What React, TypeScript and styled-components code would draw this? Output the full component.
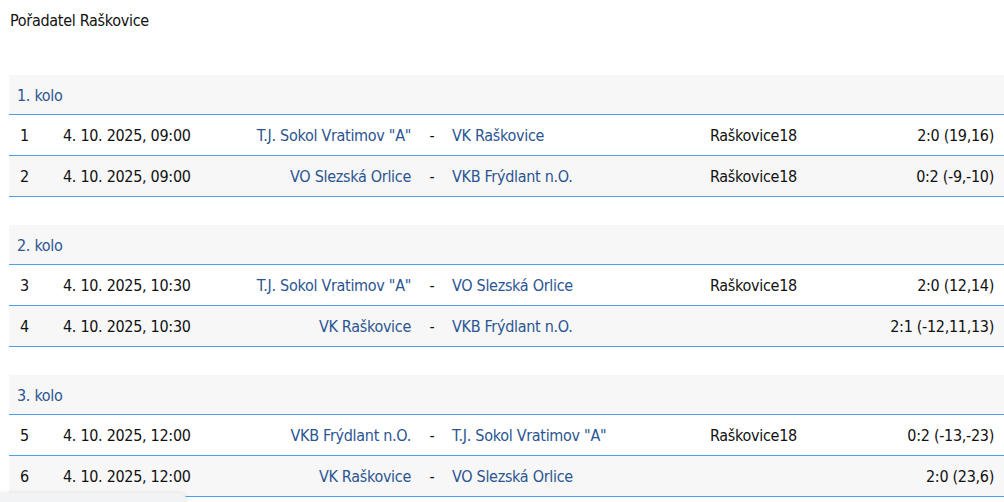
import { FC } from "react";
import styled, { createGlobalStyle } from "styled-components";

interface IMatch {
  no: number;
  date: string;
  home: string;
  away: string;
  venue?: string;
  score: string;
}

interface IRound {
  title: string;
  matches: IMatch[];
}

const rounds: IRound[] = [
  {
    title: "1. kolo",
    matches: [
      { no: 1, date: "4. 10. 2025, 09:00", home: 'T.J. Sokol Vratimov "A"', away: "VK Raškovice", venue: "Raškovice18", score: "2:0 (19,16)" },
      { no: 2, date: "4. 10. 2025, 09:00", home: "VO Slezská Orlice", away: "VKB Frýdlant n.O.", venue: "Raškovice18", score: "0:2 (-9,-10)" },
    ],
  },
  {
    title: "2. kolo",
    matches: [
      { no: 3, date: "4. 10. 2025, 10:30", home: 'T.J. Sokol Vratimov "A"', away: "VO Slezská Orlice", venue: "Raškovice18", score: "2:0 (12,14)" },
      { no: 4, date: "4. 10. 2025, 10:30", home: "VK Raškovice", away: "VKB Frýdlant n.O.", score: "2:1 (-12,11,13)" },
    ],
  },
  {
    title: "3. kolo",
    matches: [
      { no: 5, date: "4. 10. 2025, 12:00", home: "VKB Frýdlant n.O.", away: 'T.J. Sokol Vratimov "A"', venue: "Raškovice18", score: "0:2 (-13,-23)" },
      { no: 6, date: "4. 10. 2025, 12:00", home: "VK Raškovice", away: "VO Slezská Orlice", score: "2:0 (23,6)" },
    ],
  },
];

const App: FC = () => {
  return (
    <>
      <GlobalStyle />
      <Page>
        <Title>Pořadatel Raškovice</Title>
        {rounds.map((round) => (
          <Round key={round.title}>
            <RoundHead>{round.title}</RoundHead>
            {round.matches.map((m, i) => (
              <Row key={m.no} $striped={i % 2 === 1}>
                <Cell>{m.no}</Cell>
                <Cell>{m.date}</Cell>
                <Team $right>{m.home}</Team>
                <Dash>-</Dash>
                <Team>{m.away}</Team>
                <Cell>{m.venue}</Cell>
                <Score>{m.score}</Score>
              </Row>
            ))}
          </Round>
        ))}
      </Page>
      <Popup />
    </>
  );
};

export default App;

const GlobalStyle = createGlobalStyle`
  body {
    margin: 0;
    background: #fff;
    font-family: "DejaVu Sans Condensed", "Roboto", sans-serif;
    color: #111;
  }
`;

const Page = styled.div`
  padding: 10px 0 0 9px;
  width: 995px;
`;

const Title = styled.h1`
  margin: 0 0 0 1px;
  font-size: 16px;
  font-weight: 400;
  line-height: 22px;
  letter-spacing: -0.3px;
`;

const Round = styled.div`
  margin-top: 43px;
  & + & {
    margin-top: 28px;
  }
`;

const RoundHead = styled.div`
  height: 39px;
  line-height: 42px;
  padding-left: 8px;
  background: #f7f7f7;
  border-bottom: 1px solid #4a9ff0;
  color: #2b5592;
  font-size: 16px;
  letter-spacing: -0.3px;
`;

const Row = styled.div<{ $striped?: boolean }>`
  display: grid;
  grid-template-columns: 43px 160px 188px 41px 258px 1fr auto;
  align-items: center;
  height: 41px;
  padding: 0 10px 0 11px;
  background: ${(p) => (p.$striped ? "#f7f7f7" : "#fff")};
  border-bottom: 1px solid #4a9ff0;
  font-size: 16px;
  letter-spacing: -0.3px;
  box-sizing: border-box;
`;

const Cell = styled.div`
  white-space: nowrap;
  color: #111;
`;

const Team = styled.div<{ $right?: boolean }>`
  white-space: nowrap;
  color: #2b5592;
  text-align: ${(p) => (p.$right ? "right" : "left")};
`;

const Dash = styled.div`
  text-align: center;
  padding-left: 1px;
`;

const Score = styled.div`
  white-space: nowrap;
  text-align: right;
`;

const Popup = styled.div`
  position: fixed;
  left: 0;
  bottom: -20px;
  width: 187px;
  height: 29px;
  background: #f1f3f5;
  border-top-right-radius: 8px;
  box-shadow: 0 0 4px rgba(0, 0, 0, 0.12);
`;
